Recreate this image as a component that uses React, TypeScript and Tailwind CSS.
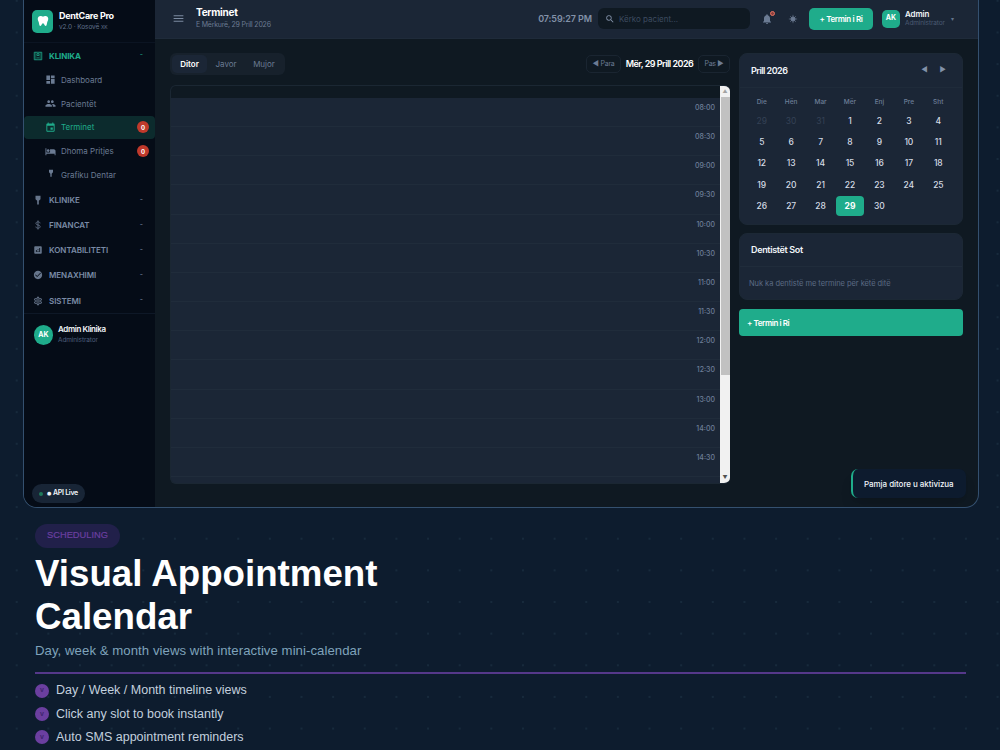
import type { ReactNode } from "react";
import {
  MdAnalytics,
  MdCheckCircle,
  MdDashboard,
  MdEvent,
  MdHotel,
  MdMenu,
  MdNotifications,
  MdOutlineSettings,
  MdPeople,
  MdSearch,
} from "react-icons/md";

const Tooth = ({ className }: { className: string }) => (
  <svg viewBox="0 0 24 24" className={className} fill="currentColor">
    <path d="M7 2C4 2 1.500 4.300 1.500 7.500c0 3 1.500 4.500 2.200 7.500.5 2.500.9 7 3.100 7 2.400 0 2.200-5.500 5.200-5.500s2.800 5.500 5.200 5.500c2.200 0 2.600-4.500 3.100-7 .7-3 2.200-4.500 2.200-7.500C22.500 4.300 20 2 17 2c-2 0-3 1.200-5 1.200S9 2 7 2z" />
  </svg>
);

const Clinic = ({ className }: { className: string }) => (
  <svg viewBox="0 0 12 12" className={className} fill="none" stroke="currentColor">
    <path d="M1.500 1.500h9v9h-9z" />
    <path d="M3.400 1.500v9M8.600 1.500v9" strokeWidth="0.700" />
    <path d="M4.800 3.200h2.400v2.300H4.800zM4.300 8.300h3.400" />
  </svg>
);

const Pin = ({ className }: { className: string }) => (
  <svg viewBox="0 0 12 12" className={className} fill="currentColor">
    <path d="M3 1h6v4L7 7v4.500H5V7L3 5z" />
  </svg>
);

const Dollar = ({ className }: { className: string }) => (
  <svg viewBox="0 0 12 12" className={className} fill="none" stroke="currentColor">
    <path d="M8.500 4C8.300 2.700 7.300 2.200 6 2.200S3.500 2.900 3.500 4.100C3.500 6.800 8.600 5.200 8.600 7.900 8.600 9.200 7.400 9.800 6 9.800S3.500 9.200 3.400 7.900M6 .5v11" />
  </svg>
);

type SubItem = { label: string; icon: ReactNode; active?: boolean; badge?: number };

const subItems: SubItem[] = [
  { label: "Dashboard", icon: <MdDashboard className="size-[11px]" /> },
  { label: "Pacientët", icon: <MdPeople className="size-[11px]" /> },
  { label: "Terminet", icon: <MdEvent className="size-[11px]" />, active: true, badge: 0 },
  { label: "Dhoma Pritjes", icon: <MdHotel className="size-[11px]" />, badge: 0 },
  { label: "Grafiku Dentar", icon: <Pin className="mb-1 size-2" /> },
];

const groups = [
  { label: "KLINIKE", icon: <Pin className="size-2.5" /> },
  { label: "FINANCAT", icon: <Dollar className="size-2.5" /> },
  { label: "KONTABILITETI", icon: <MdAnalytics className="size-2.5" /> },
  { label: "MENAXHIMI", icon: <MdCheckCircle className="size-2.5" /> },
  { label: "SISTEMI", icon: <MdOutlineSettings className="size-2.5" /> },
];

const slots = [
  "08:00", "08:30", "09:00", "09:30", "10:00", "10:30", "11:00",
  "11:30", "12:00", "12:30", "13:00", "14:00", "14:30",
];

const weekdays = ["Die", "Hën", "Mar", "Mër", "Enj", "Pre", "Sht"];
const previousDays = [29, 30, 31];
const days = Array.from({ length: 30 }, (_, i) => i + 1);

const features = [
  "Day / Week / Month timeline views",
  "Click any slot to book instantly",
  "Auto SMS appointment reminders",
];

const Sidebar = () => (
  <aside className="flex w-[131px] shrink-0 flex-col bg-[#050c17]">
    <div className="flex h-[43px] items-center gap-1.5 border-b border-[#0b1422] pl-2">
      <div className="flex h-[23px] w-[21px] items-center justify-center rounded-[5px] bg-[#1fac8b] text-white">
        <Tooth className="h-3 w-3" />
      </div>
      <div className="whitespace-nowrap">
        <div className="text-[9px] leading-[12px] font-bold tracking-[-0.3px] text-white">DentCare Pro</div>
        <div className="text-[6.500px] leading-[11px] tracking-[-0.1px] text-[#61728c]">
          v2.0 · Kosovë <span className="text-[5px]">XK</span>
        </div>
      </div>
    </div>

    <div className="flex h-[25px] items-center pr-3 pl-[9px] text-[#1fac8b]">
      <Clinic className="size-2.5" />
      <span className="ml-1.5 text-[8px] font-bold tracking-[-0.1px]">KLINIKA</span>
      <span className="ml-auto text-[7px]">-</span>
    </div>
    {subItems.map((item) => (
      <div
        key={item.label}
        className={
          item.active
            ? "flex h-[23.750px] items-center rounded-[4px] bg-[#0c2b2d] pr-1.5 pl-[21px] text-[#1fac8b]"
            : "flex h-[23.750px] items-center pr-1.5 pl-[21px] text-[#6b7b93]"
        }
      >
        <span className="flex w-[11px] justify-center">{item.icon}</span>
        <span className="ml-[5px] text-[8px] whitespace-nowrap">{item.label}</span>
        {item.badge !== undefined && (
          <span className="ml-auto flex size-3 items-center justify-center rounded-full bg-[#c0392b] text-[6px] font-bold text-white">
            {item.badge}
          </span>
        )}
      </div>
    ))}
    {groups.map((group) => (
      <div key={group.label} className="flex h-[25.200px] items-center pt-px pr-3 pl-[9px] text-[#7a8ba6]">
        <span className="text-[#66758b]">{group.icon}</span>
        <span className="ml-1.5 text-[8px] font-semibold tracking-[-0.05px]">{group.label}</span>
        <span className="ml-auto text-[7px]">-</span>
      </div>
    ))}

    <div className="flex h-[44px] items-center gap-[5px] border-t border-[#0e1827] pl-2.5">
      <div className="flex h-5 w-[19px] items-center justify-center rounded-full bg-[#1fac8b] text-[7px] font-bold text-white">
        AK
      </div>
      <div className="whitespace-nowrap">
        <div className="text-[8px] leading-[11px] font-semibold tracking-[-0.4px] text-slate-100">Admin Klinika</div>
        <div className="text-[6.500px] leading-[11px] tracking-[-0.1px] text-[#4d5f7b]">Administrator</div>
      </div>
    </div>

    <div className="mt-auto mb-1 ml-2 flex h-[19px] w-[53px] items-center rounded-full bg-[#182536] pl-[7px]">
      <span className="size-1 rounded-full bg-[#1f7a5b]" />
      <span className="ml-1 flex items-center text-[7px] font-semibold tracking-[-0.3px] whitespace-nowrap text-slate-100">
        <span className="mr-0.5 font-['DejaVu_Sans'] text-[5px]">●</span>API Live
      </span>
    </div>
  </aside>
);

const TopBar = () => (
  <header className="flex h-[39px] shrink-0 items-center border-b border-[#1f2b3a] bg-[#1b2636] pr-4 pl-[17px] pb-px">
    <MdMenu className="size-[13px] text-[#7c8ba1]" />
    <div className="ml-[11px] whitespace-nowrap">
      <div className="text-[10px] leading-[13px] font-bold tracking-[-0.5px] text-white">
        <span className="tracking-[-0.250px]">Terminet</span>
      </div>
      <div className="text-[7px] leading-[12px] tracking-[-0.22px] text-[#6b7b93]">E Mërkurë, 29 Prill 2026</div>
    </div>
    <div className="ml-auto text-[9px] font-semibold tracking-[-0.1px] text-[#8291a8]">07:59:27 PM</div>
    <div className="ml-1.5 flex h-[21px] w-[152px] items-center rounded-[6px] bg-[#0f1922] pl-[7px]">
      <MdSearch className="size-2.5 text-[#8291a8]" />
      <span className="ml-1 text-[8px] text-[#3d4b60]">Kërko pacient...</span>
    </div>
    <div className="relative ml-[11px] text-[#6b7b93]">
      <MdNotifications className="size-3" />
      <span className="absolute -top-0.5 -right-0.5 size-[5px] rounded-full border border-[#e57361] bg-[#8c3f3e]" />
    </div>
    <svg viewBox="0 0 12 12" className="ml-[15px] size-2.5 text-[#6b7b93]" fill="currentColor" stroke="currentColor">
      <circle cx="6" cy="6" r="2.500" />
      <path d="M6 1v10M1 6h10M2.500 2.500l7 7M9.500 2.500l-7 7" strokeWidth="0.700" />
    </svg>
    <button className="ml-[11px] h-[22px] w-[64px] rounded-[5px] bg-[#1fac8b] text-[8px] font-semibold tracking-[-0.350px] text-white">
      + Termin i Ri
    </button>
    <div className="ml-[9px] flex w-[80px] items-center">
      <div className="flex size-[18px] items-center justify-center rounded-[5px] bg-[#1fac8b] text-[7px] font-bold text-white">
        AK
      </div>
      <div className="ml-[5px] whitespace-nowrap">
        <div className="text-[8px] leading-[9px] font-semibold tracking-[-0.1px] text-slate-100">Admin</div>
        <div className="text-[6.500px] leading-[8px] tracking-[-0.1px] text-[#4a5a72]">Administrator</div>
      </div>
      <span className="mr-2 ml-auto text-[6px] text-[#64748b]">▾</span>
    </div>
  </header>
);

const DayView = () => (
  <section className="flex w-[560px] shrink-0 flex-col">
    <div className="flex h-[22px] items-center">
      <div className="flex h-[22px] w-[115px] items-center rounded-[6px] bg-[#17212c] text-[8px] text-[#6b7b93]">
        <span className="ml-0.5 flex h-[18px] w-[35px] items-center justify-center rounded-[5px] bg-[#1b2636] font-semibold text-white">
          Ditor
        </span>
        <span className="w-[38px] text-center">Javor</span>
        <span className="w-[38px] text-center">Mujor</span>
      </div>
      <div className="ml-auto flex items-center text-[7px] text-[#6b7b93]">
        <span className="flex h-[18px] w-[35px] items-center justify-center rounded-[5px] border border-[#1a2531] tracking-[-0.2px]">◀ Para</span>
        <span className="w-[77px] text-center text-[9px] font-semibold tracking-[-0.52px] whitespace-nowrap text-white">
          Mër, 29 Prill 2026
        </span>
        <span className="flex h-[18px] w-[32px] items-center justify-center rounded-[5px] border border-[#1a2531] tracking-[-0.3px]">Pas ▶</span>
      </div>
    </div>
    <div className="mt-[10px] flex h-[399px] overflow-hidden rounded-[6px] border border-r-0 border-[#1b2733] bg-[#1b2636]">
      <div className="flex-1">
        <div className="h-3 bg-[#0f1922]" />
        {slots.map((slot) => (
          <div
            key={slot}
            className="h-[29.170px] border-b border-[#202c3b] pt-1 pr-[5px] text-right text-[7px] leading-[11px] font-medium text-[#6d7e98]"
          >
            {slot}
          </div>
        ))}
      </div>
      <div className="flex w-[10px] flex-col items-center bg-[#f1f1f1] text-[5px] leading-[11px] text-[#505050]">
        <span className="h-[11px] text-[#a3a3a3]">▲</span>
        <span className="h-[278px] w-[9px] bg-[#c1c1c1]" />
        <span className="mt-auto h-[11px]">▼</span>
      </div>
    </div>
  </section>
);

const SidePanel = () => (
  <section className="flex w-[224px] shrink-0 flex-col">
    <div className="h-[172px] rounded-[8px] border border-[#1c2835] bg-[#1b2636]">
      <div className="flex h-[34px] items-center border-b border-[#1f2b3a] pr-4 pl-[11px]">
        <span className="text-[9px] font-semibold tracking-[-0.530px] text-slate-100">Prill 2026</span>
        <span className="ml-auto text-[7px] text-[#8291a8]">◀</span>
        <span className="ml-3 text-[7px] text-[#8291a8]">▶</span>
      </div>
      <div className="grid grid-cols-7 pt-[6px] pr-[9px] pl-[7px] text-center">
        {weekdays.map((day) => (
          <span key={day} className="h-[17px] text-[6.500px] leading-[17px] font-medium text-[#6d7e98]">{day}</span>
        ))}
        {previousDays.map((day) => (
          <span key={day} className="h-[21.200px] text-[8.500px] leading-[21px] text-[#344155]">{day}</span>
        ))}
        {days.map((day) => (
          <span
            key={day}
            className={
              day === 29
                ? "mx-px h-[20px] rounded-[4px] bg-[#1fac8b] text-[8.500px] leading-[20px] font-bold text-white"
                : "h-[21.200px] text-[8.500px] leading-[21px] font-medium tracking-[-0.1px] text-[#d5dce5]"
            }
          >
            {day}
          </span>
        ))}
      </div>
    </div>
    <div className="mt-2 h-[67px] rounded-[8px] border border-[#1c2835] bg-[#1b2636]">
      <div className="flex h-[33px] items-center border-b border-[#202c3b] pl-[11px] text-[9px] font-semibold tracking-[-0.340px] text-slate-100">
        Dentistët Sot
      </div>
      <div className="flex h-[33px] items-center pl-[9px] text-[7.500px] tracking-[-0.050px] whitespace-nowrap text-[#5b6b84]">
        Nuk ka dentistë me termine për këtë ditë
      </div>
    </div>
    <button className="mt-[9px] h-[27px] rounded-[4px] bg-[#1fac8b] pl-2 text-left text-[8px] font-semibold tracking-[-0.420px] text-white">
      + Termin i Ri
    </button>
  </section>
);

const App = () => (
  <div className="h-[750px] w-[1000px] overflow-hidden bg-[#0d1c2e] bg-[radial-gradient(circle,#172a3c_1px,transparent_1.400px)] bg-size-[31.650px_31.650px] bg-position-[0.900px_-15px] font-['Inter','Liberation_Sans',sans-serif]">
    <div className="relative mx-[23px] flex h-[508px] w-[956px] overflow-hidden rounded-b-[14px] border border-t-0 border-[#34506f] bg-[#0f1922]">
      <Sidebar />
      <div className="flex flex-1 flex-col">
        <TopBar />
        <main className="flex flex-1 gap-[9px] pt-[14px] pl-[15px]">
          <DayView />
          <SidePanel />
        </main>
      </div>
      <div className="absolute right-3 bottom-[9px] flex h-[29px] w-[115px] items-center rounded-[7px] border-l-2 border-[#1fac8b] bg-[#0d1b2e] pl-[11px] text-[8px] font-medium tracking-[-0.050px] whitespace-nowrap text-slate-100 shadow-lg">
        Pamja ditore u aktivizua
      </div>
    </div>

    <div className="px-[35px] pt-4 font-['Liberation_Sans',Arial,sans-serif]">
      <div className="flex h-6 w-[85px] items-center justify-center rounded-full bg-[#21204a] text-[9.300px] text-[#6b3fa0] [-webkit-text-stroke:0.200px_#6b3fa0]">
        SCHEDULING
      </div>
      <h1 className="mt-1 w-[400px] text-[36.700px] leading-[43px] font-bold text-white">Visual Appointment Calendar</h1>
      <p className="mt-[3px] text-[13.200px] leading-[19px] tracking-[0.050px] text-[#7fa3bb]">
        Day, week &amp; month views with interactive mini-calendar
      </p>
      <div className="mt-3 h-[2px] w-[931px] bg-[#55388a]" />
      <ul className="mt-[5px]">
        {features.map((feature) => (
          <li key={feature} className="flex h-[23.400px] items-center text-[12.500px] text-[#c3d0de]">
            <span className="mr-[7px] flex size-3.5 items-center justify-center rounded-full bg-[#6b3fa0] text-[7px] font-bold text-[#40246f]">v</span>
            {feature}
          </li>
        ))}
      </ul>
    </div>
  </div>
);

export default App;
